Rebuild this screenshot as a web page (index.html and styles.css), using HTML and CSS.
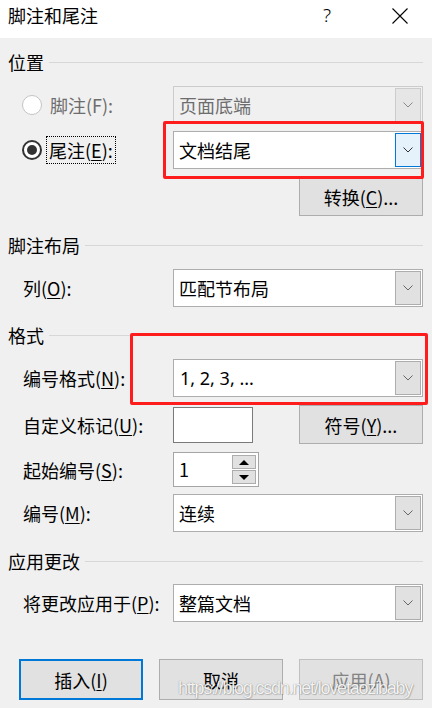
FILE: index.html
```html
<!DOCTYPE html>
<html lang="zh-CN">
<head>
<meta charset="utf-8">
<title>脚注和尾注</title>
<link rel="stylesheet" href="styles.css">
</head>
<body>
<div class="dialog">
  <div class="titlebar">
    <span class="title">脚注和尾注</span>
    <span class="help">?</span>
    <span class="close"><svg width="16" height="16" viewBox="0 0 16 16"><path d="M0.5 0.5L15.5 15.5M15.5 0.5L0.5 15.5" stroke="#000" stroke-width="1.1" fill="none"/></svg></span>
  </div>
  <div class="content">
    <div class="group-header g1"><span class="gh-text">位置</span><i class="rule"></i></div>

    <div class="row r-foot">
      <div class="radio-label disabled"><span class="radio"></span><span class="lbl">脚注(F):</span></div>
      <div class="combo disabled"><span class="val">页面底端</span><span class="drop"><svg width="10" height="6" viewBox="0 0 10 6"><path d="M0.5 0.5L5 5L9.5 0.5" stroke="#8a8a8a" stroke-width="1" fill="none"/></svg></span></div>
    </div>

    <div class="row r-end">
      <div class="radio-label"><span class="radio checked"></span><span class="lbl focus">尾注(<u>E</u>):</span></div>
      <div class="combo focused"><span class="val">文档结尾</span><span class="drop"><svg width="10" height="6" viewBox="0 0 10 6"><path d="M0.5 0.5L5 5L9.5 0.5" stroke="#333" stroke-width="1" fill="none"/></svg></span></div>
    </div>

    <div class="row r-convert">
      <span></span>
      <div class="cell-end"><span class="btn btn-convert">转换(<u>C</u>)...</span></div>
    </div>

    <div class="group-header g2"><span class="gh-text">脚注布局</span><i class="rule"></i></div>

    <div class="row r-col">
      <span class="lbl">列(<u>O</u>):</span>
      <div class="combo"><span class="val">匹配节布局</span><span class="drop"><svg width="10" height="6" viewBox="0 0 10 6"><path d="M0.5 0.5L5 5L9.5 0.5" stroke="#666" stroke-width="1" fill="none"/></svg></span></div>
    </div>

    <div class="group-header g3"><span class="gh-text">格式</span><i class="rule"></i></div>

    <div class="row r-numfmt">
      <span class="lbl">编号格式(<u>N</u>):</span>
      <div class="combo"><span class="val latin">1, 2, 3, ...</span><span class="drop"><svg width="10" height="6" viewBox="0 0 10 6"><path d="M0.5 0.5L5 5L9.5 0.5" stroke="#666" stroke-width="1" fill="none"/></svg></span></div>
    </div>

    <div class="row r-custom">
      <span class="lbl">自定义标记(<u>U</u>):</span>
      <div class="cell-split"><span class="textbox"></span><span class="btn btn-symbol">符号(<u>Y</u>)...</span></div>
    </div>

    <div class="row r-start">
      <span class="lbl">起始编号(<u>S</u>):</span>
      <div class="cell-start">
        <div class="spin"><span class="spin-val">1</span><span class="spin-btns"><span class="sb up"><i class="tri-up"></i></span><span class="sb down"><i class="tri-down"></i></span></span></div>
      </div>
    </div>

    <div class="row r-num">
      <span class="lbl">编号(<u>M</u>):</span>
      <div class="combo"><span class="val">连续</span><span class="drop"><svg width="10" height="6" viewBox="0 0 10 6"><path d="M0.5 0.5L5 5L9.5 0.5" stroke="#666" stroke-width="1" fill="none"/></svg></span></div>
    </div>

    <div class="group-header g4"><span class="gh-text">应用更改</span><i class="rule"></i></div>

    <div class="row r-apply">
      <span class="lbl">将更改应用于(<u>P</u>):</span>
      <div class="combo"><span class="val">整篇文档</span><span class="drop"><svg width="10" height="6" viewBox="0 0 10 6"><path d="M0.5 0.5L5 5L9.5 0.5" stroke="#666" stroke-width="1" fill="none"/></svg></span></div>
    </div>

    <div class="actions">
      <span class="btn btn-default">插入(<u>I</u>)</span>
      <span class="btn">取消</span>
      <span class="btn btn-disabled">应用(A)</span>
    </div>
  </div>

  <div class="mark mark-1"></div>
  <div class="mark mark-2"></div>
  <div class="watermark">https://blog.csdn.net/lovetaozibaby</div>
</div>
</body>
</html>
```

FILE: styles.css
```css
* { box-sizing: border-box; }

html, body {
  margin: 0;
  padding: 0;
  background: #f0f0f0;
}

body {
  font-family: "Noto Sans CJK SC", "Noto Sans", sans-serif;
  font-size: 18px;
  color: #000;
}

u { text-decoration: underline; text-underline-offset: 2px; text-decoration-thickness: 1px; }

.dialog {
  position: relative;
  width: 432px;
  height: 708px;
  overflow: hidden;
  background: #f0f0f0;
}

/* title bar */
.titlebar {
  height: 38px;
  background: #fff;
  display: flex;
  align-items: flex-start;
  padding-left: 8px;
}
.title {
  line-height: 30px;
  flex: 1;
}
.help {
  font-family: "Noto Sans", sans-serif;
  font-weight: 300;
  line-height: 30px;
  font-size: 19px;
  width: 12px;
  margin-right: 57px;
}
.close {
  width: 16px;
  height: 16px;
  margin-top: 8px;
  margin-right: 24px;
  display: flex;
}

/* content */
.content {
  padding: 0 9px 0 8px;
}

.group-header {
  height: 24px;
  display: flex;
  align-items: center;
  gap: 5px;
  line-height: 24px;
}
.rule {
  flex: 1;
  height: 1px;
  background: #d7d7d7;
}
.g1 { margin-top: 12px; }
.g2 { margin-top: 17px; }
.g3 { margin-top: 16px; }
.g4 { margin-top: 17px; }

.row {
  display: grid;
  grid-template-columns: 150px 250px;
  padding-left: 15px;
  align-items: center;
}
.r-foot { margin-top: 12px; }
.r-end { margin-top: 7px; }
.r-convert { margin-top: 8px; }
.r-col { margin-top: 12px; }
.r-numfmt { margin-top: 12px; }
.r-custom { margin-top: 8px; }
.r-start { margin-top: 8px; }
.r-num { margin-top: 7px; }
.r-apply { margin-top: 11px; }

.lbl {
  line-height: 26px;
  white-space: nowrap;
}

/* radio */
.radio-label {
  display: flex;
  align-items: center;
  gap: 7px;
  margin-left: -1px;
}
.radio-label .lbl { padding: 0 1px; margin-left: -2px; }
.radio-label.disabled .lbl { color: #6d6d6d; margin-left: 0; }
.radio {
  width: 20px;
  height: 20px;
  border-radius: 50%;
  border: 1px solid #c4c4c4;
  background: #fff;
  display: flex;
  align-items: center;
  justify-content: center;
}
.radio.checked {
  border: 2px solid #333;
}
.radio.checked::after {
  content: "";
  width: 10px;
  height: 10px;
  border-radius: 50%;
  background: #333;
}
.lbl.focus {
  outline: 1px dotted #000;
  outline-offset: 0;
  padding: 0 2px;
}

/* combo box */
.combo {
  width: 250px;
  height: 38px;
  border: 1px solid #adadad;
  background: #fff;
  display: flex;
  padding: 1px;
}
.combo .val {
  flex: 1;
  padding-left: 4px;
  line-height: 34px;
  white-space: nowrap;
}
.combo .val.latin {
  font-family: "Noto Sans", "Open Sans", sans-serif;
  font-size: 18px;
  padding-left: 5px;
}
.combo .drop {
  width: 26px;
  border: 1px solid #adadad;
  background: #e1e1e1;
  display: flex;
  align-items: center;
  justify-content: center;
}
.combo.disabled {
  background: #f0f0f0;
  border-color: #cccccc;
}
.combo.disabled .val { color: #6d6d6d; }
.combo.disabled .drop {
  background: #e6e6e6;
  border-color: #cccccc;
}
.combo.focused .drop {
  background: #e5f1fb;
  border-color: #0078d7;
}

/* buttons */
.btn {
  display: flex;
  align-items: center;
  justify-content: center;
  width: 124px;
  height: 39px;
  background: #e1e1e1;
  border: 1px solid #adadad;
  white-space: nowrap;
}
.cell-end {
  display: flex;
  justify-content: flex-end;
}
.cell-split {
  display: flex;
  justify-content: space-between;
  align-items: center;
}
.textbox {
  width: 80px;
  height: 36px;
  background: #fff;
  border: 1px solid #7a7a7a;
}

/* spin box */
.cell-start { display: flex; }
.spin {
  width: 86px;
  height: 35px;
  background: #fff;
  border: 1px solid #a5a5a5;
  padding: 2px;
  display: flex;
}
.spin-val {
  flex: 1;
  line-height: 29px;
  padding-left: 3px;
}
.spin-btns {
  width: 24px;
  display: flex;
  flex-direction: column;
  gap: 1px;
}
.sb {
  flex: 1;
  background: #e1e1e1;
  border: 1px solid #adadad;
  display: flex;
  align-items: center;
  justify-content: center;
}
.tri-up {
  width: 0;
  height: 0;
  border-left: 5px solid transparent;
  border-right: 5px solid transparent;
  border-bottom: 5px solid #000;
}
.tri-down {
  width: 0;
  height: 0;
  border-left: 5px solid transparent;
  border-right: 5px solid transparent;
  border-top: 5px solid #000;
}

/* action buttons */
.actions {
  margin-top: 37px;
  padding-left: 11px;
  display: flex;
  gap: 16px;
}
.actions .btn { height: 41px; }
.btn-default {
  border: 2px solid #0078d7;
}
.btn-disabled {
  color: #838383;
  border-color: #bfbfbf;
}

/* annotations */
.mark {
  position: absolute;
  border: 3px solid #fe1c1c;
  border-radius: 2px;
}
.mark-1 { left: 163px; top: 121px; width: 261px; height: 58px; }
.mark-2 { left: 130px; top: 333px; width: 298px; height: 72px; }

.watermark {
  position: absolute;
  left: 178px;
  top: 678px;
  font-family: "Liberation Sans", Arial, sans-serif;
  font-size: 18px;
  line-height: 20px;
  letter-spacing: -1.2px;
  color: rgba(255, 255, 255, 0.92);
  text-shadow: 0 0 1px rgba(0, 0, 0, 0.45), 1px 1px 1px rgba(0, 0, 0, 0.15);
  white-space: nowrap;
}
```
